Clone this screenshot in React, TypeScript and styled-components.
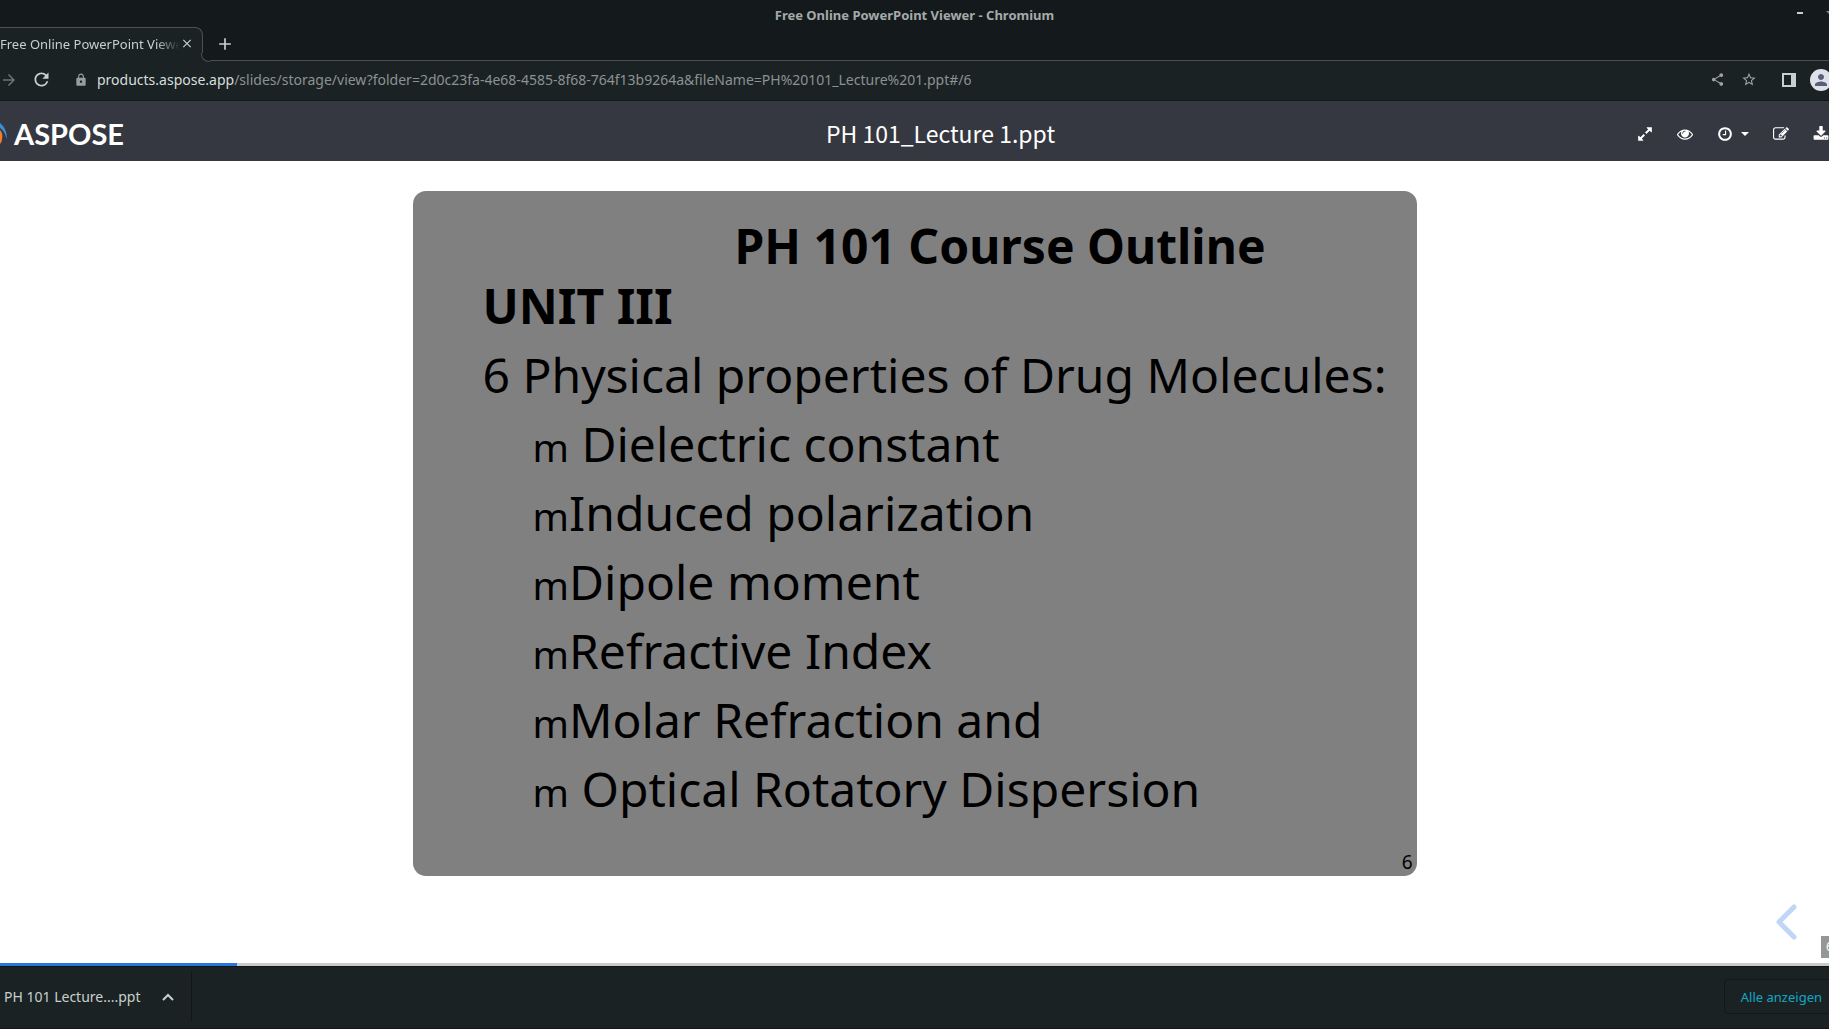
import React from 'react';
import styled, { createGlobalStyle } from 'styled-components';
import { MdArrowForward, MdClose, MdLock, MdPerson, MdRefresh, MdShare, MdStarBorder, MdAdd } from 'react-icons/md';

const color = {
  frame: '#141a1c',
  toolbar: '#1b2224',
  line: '#4b5153',
  text: '#c8d0ce',
  muted: '#8b9292',
  header: '#353840',
  slide: '#808080',
  accent: '#2a76dd',
  link: '#12a8c4',
};

const Global = createGlobalStyle`
  * { box-sizing: border-box; }
  html, body { margin: 0; height: 100%; }
  #root { height: 100%; }
  body { overflow: hidden; font-family: "Noto Sans", sans-serif; background: #fff; }
  button { font: inherit; color: inherit; background: none; border: 0; padding: 0; cursor: pointer; }
  svg { display: block; }
`;

const Window = styled.div`
  display: flex;
  flex-direction: column;
  height: 100vh;
  min-height: 900px;
  overflow: hidden;
`;

const TitleBar = styled.div`
  display: grid;
  grid-template-columns: 1fr auto 1fr;
  align-items: center;
  height: 27px;
  flex: none;
  padding-top: 3px;
  background: ${color.frame};
  color: #a4aba9;
  font-size: 13px;
  line-height: 20px;
  font-weight: 700;
`;

const WindowControls = styled.div`
  grid-column: 3;
  justify-self: end;
  display: flex;
  align-items: center;
  gap: 22px;
  margin-right: -6px;
  padding-bottom: 4px;
  color: ${color.text};
`;

const TabStrip = styled.div`
  display: flex;
  height: 34px;
  flex: none;
  background: ${color.frame};
`;

const Tab = styled.div`
  position: relative;
  display: flex;
  align-items: center;
  width: 203px;
  padding: 0 8px 2px 0;
  background: ${color.toolbar};
  border: 1px solid ${color.line};
  border-width: 1px 1px 0 0;
  border-top-right-radius: 8px;
  color: ${color.text};
  font-size: 13px;
  line-height: 18px;
`;

const TabTitle = styled.span`
  flex: 1;
  overflow: hidden;
  white-space: nowrap;
  mask-image: linear-gradient(to right, #000 calc(100% - 24px), transparent);
`;

const TabFoot = styled.span`
  position: absolute;
  right: -8px;
  bottom: 0;
  width: 8px;
  height: 8px;
  background: ${color.toolbar};

  &::before {
    content: '';
    display: block;
    height: 100%;
    margin-left: -1px;
    background: ${color.frame};
    border: 1px solid ${color.line};
    border-width: 0 0 1px 1px;
    border-bottom-left-radius: 8px;
  }
`;

const TabEnd = styled.div`
  flex: 1;
  display: flex;
  align-items: center;
  padding-left: 12px;
  border-bottom: 1px solid ${color.line};
  color: ${color.text};
`;

const SquareButton = styled.button<{ $size: number }>`
  display: flex;
  align-items: center;
  justify-content: center;
  flex: none;
  width: ${(p) => p.$size}px;
  height: ${(p) => p.$size}px;
`;

const Toolbar = styled.div`
  display: flex;
  align-items: center;
  height: 40px;
  flex: none;
  padding-bottom: 2px;
  background: ${color.toolbar};
  border-bottom: 1px solid #141819;
  color: ${color.text};
`;

const NavButtons = styled.div`
  display: flex;
  align-items: center;
  gap: 12px;
  width: 74px;
`;

const Address = styled.div`
  flex: 1;
  min-width: 0;
  display: flex;
  align-items: center;
  gap: 9px;
  overflow: hidden;
  white-space: nowrap;
  font-size: 14px;
  line-height: 20px;
  color: ${color.muted};
  strong { font-weight: 400; color: #d5dedc; }
`;

const ToolbarActions = styled.div`
  display: flex;
  align-items: center;
  margin-right: -3px;
  color: #9ea5a4;
`;

const ToolButton = styled(SquareButton)<{ $gap?: number }>`
  margin-left: ${(p) => p.$gap ?? 0}px;
`;

const Avatar = styled.button`
  display: flex;
  align-items: center;
  justify-content: center;
  width: 22px;
  height: 22px;
  margin-left: 11px;
  border-radius: 50%;
  background: #dfe1e8;
  color: #56607a;
`;

const AppHeader = styled.header`
  display: flex;
  align-items: center;
  height: 60px;
  flex: none;
  padding-top: 6px;
  background: ${color.header};
  color: #fff;
`;

const Brand = styled.a`
  flex: 1;
  display: flex;
  align-items: center;
  gap: 7px;
  color: #fff;
  text-decoration: none;
  font-family: Lato, sans-serif;
  font-size: 29px;
  line-height: 32px;
  font-weight: 700;
`;

const FileName = styled.h1`
  margin: 0;
  padding: 0 0 3px 52px;
  font-family: "Noto Sans CJK SC", sans-serif;
  font-size: 23px;
  line-height: 32px;
  font-weight: 400;
`;

const HeaderSide = styled.div`
  flex: 1;
  display: flex;
  justify-content: flex-end;
`;

const Actions = styled.div`
  display: flex;
  align-items: center;
  gap: 24px;
`;

const HeaderButton = styled.button`
  display: flex;
  align-items: center;
  gap: 8px;
`;

const Caret = styled.span`
  border: 4px solid transparent;
  border-top-color: #fff;
  border-bottom: 0;
`;

const Viewer = styled.main`
  position: relative;
  flex: 1;
  min-height: 0;
  overflow: hidden;
  padding-top: 30px;
  background: #fff;
`;

const Slide = styled.article`
  display: flex;
  flex-direction: column;
  width: 1004px;
  max-width: 92%;
  margin: 0 auto;
  padding: 25px 4px 0 70px;
  border-radius: 13px;
  background: ${color.slide};
  color: #000;
  font-size: 48px;
  line-height: 69px;
`;

const SlideTitle = styled.h2`
  margin: 0;
  padding-left: 252px;
  font-size: 48px;
  line-height: 60px;
  font-weight: 700;
`;

const Unit = styled.h3`
  margin: 0 0 4px;
  font-size: 48px;
  line-height: 60px;
  font-weight: 700;
`;

const Topic = styled.p`
  margin: 0;
`;

const Points = styled.ul`
  margin: 0;
  padding: 0 0 0 50px;
  list-style: none;
`;

const Point = styled.li`
  white-space: pre;
`;

const Marker = styled.span`
  font-size: 39px;
  line-height: 48px;
`;

const PageNumber = styled.footer`
  align-self: flex-end;
  padding: 26px 0 0;
  font-size: 19px;
  line-height: 27px;
`;

const Previous = styled.button`
  position: absolute;
  right: 30px;
  bottom: 22px;
  color: #bfd6f6;
`;

const SlideBadge = styled.span`
  position: absolute;
  right: -28px;
  bottom: 5px;
  width: 36px;
  padding: 0 5px;
  background: #959797;
  color: #fff;
  font-size: 12px;
  line-height: 22px;
`;

const Progress = styled.div`
  height: 3px;
  flex: none;
  background: #c9caca;
`;

const ProgressFill = styled.div`
  height: 100%;
  background: ${color.accent};
`;

const Shelf = styled.footer`
  display: flex;
  align-items: center;
  justify-content: space-between;
  height: 63px;
  flex: none;
  padding-bottom: 2px;
  background: ${color.toolbar};
  border: 1px solid #111617;
  border-width: 1px 0;
  color: ${color.text};
`;

const Download = styled.div`
  display: flex;
  align-items: center;
  justify-content: space-between;
  width: 192px;
  height: 49px;
  padding: 0 16px 0 4px;
  border-right: 1px solid #111617;
  font-size: 14px;
  line-height: 20px;
`;

const ShowAll = styled.button`
  height: 35px;
  margin-right: -10px;
  padding: 0 16px;
  border: 1px solid #12181a;
  border-radius: 4px;
  color: ${color.link};
  font-size: 13px;
  line-height: 18px;
`;

const glyphs = {
  expand:
    'M883 1056q0 13-10 23l-332 332 144 144q19 19 19 45t-19 45-45 19h-448q-26 0-45-19t-19-45v-448q0-26 19-45t45-19 45 19l144 144 332-332q10-10 23-10t23 10l114 114q10 10 10 23zm781-864v448q0 26-19 45t-45 19-45-19l-144-144-332 332q-10 10-23 10t-23-10l-114-114q-10-10-10-23t10-23l332-332-144-144q-19-19-19-45t19-45 45-19h448q26 0 45 19t19 45z',
  eye:
    'M1664 960q-152-236-381-353 61 104 61 225 0 185-131.5 316.5t-316.5 131.5-316.5-131.5-131.5-316.5q0-121 61-225-229 117-381 353 133 205 333.5 326.5t434.5 121.5 434.5-121.5 333.5-326.5zm-720-384q0-20-14-34t-34-14q-125 0-214.5 89.5t-89.5 214.5q0 20 14 34t34 14 34-14 14-34q0-86 61-147t147-61q20 0 34-14t14-34zm848 384q0 34-20 69-140 230-376.5 368.5t-499.5 138.5-499.5-139-376.5-368q-20-35-20-69t20-69q140-229 376.5-368t499.5-139 499.5 139 376.5 368q20 35 20 69z',
  clock:
    'M1024 544v448q0 14-9 23t-23 9h-320q-14 0-23-9t-9-23v-64q0-14 9-23t23-9h224v-352q0-14 9-23t23-9h64q14 0 23 9t9 23zm416 352q0-148-73-273t-198-198-273-73-273 73-198 198-73 273 73 273 198 198 273 73 273-73 198-198 73-273zm224 0q0 209-103 385.5t-279.5 279.5-385.5 103-385.5-103-279.5-279.5-103-385.5 103-385.5 279.5-279.5 385.5-103 385.5 103 279.5 279.5 103 385.5z',
  edit:
    'M888 1184l116-116-152-152-116 116v56h96v96h56zm440-720q-16-16-33 1l-350 350q-17 17-1 33t33-1l350-350q17-17 1-33zm80 594v190q0 119-84.5 203.5t-203.5 84.5h-832q-119 0-203.5-84.5t-84.5-203.5v-832q0-119 84.5-203.5t203.5-84.5h832q63 0 117 25 15 7 18 23 3 17-9 29l-49 49q-14 14-32 8-23-6-45-6h-832q-66 0-113 47t-47 113v832q0 66 47 113t113 47h832q66 0 113-47t47-113v-126q0-13 9-22l64-64q15-15 35-7t20 29zm-96-738l288 288-672 672h-288v-288zm444 132l-92 92-288-288 92-92q28-28 68-28t68 28l152 152q28 28 28 68t-28 68z',
  download:
    'M1344 1344q0-26-19-45t-45-19-45 19-19 45 19 45 45 19 45-19 19-45zm256 0q0-26-19-45t-45-19-45 19-19 45 19 45 45 19 45-19 19-45zm128-224v320q0 40-28 68t-68 28h-1472q-40 0-68-28t-28-68v-320q0-40 28-68t68-28h465l135 136q58 56 136 56t136-56l136-136h464q40 0 68 28t28 68zm-325-569q17 41-14 70l-448 448q-18 19-45 19t-45-19l-448-448q-31-29-14-70 17-39 59-39h256v-448q0-26 19-45t45-19h256q26 0 45 19t19 45v448h256q42 0 59 39z',
};

const Glyph = ({ name }: { name: keyof typeof glyphs }) => (
  <svg width="16" height="16" viewBox="0 0 1792 1792" fill="currentColor" aria-hidden="true">
    <path d={glyphs[name]} />
  </svg>
);

const points = [
  ' Dielectric constant',
  'Induced polarization',
  'Dipole moment',
  'Refractive Index',
  'Molar Refraction and',
  ' Optical Rotatory Dispersion',
];

const current = 6;
const progress = 12.96;

export default function App() {
  return (
    <Window>
      <Global />
      <TitleBar>
        <span />
        <span>Free Online PowerPoint Viewer - Chromium</span>
        <WindowControls>
          <button aria-label="Minimize">
            <svg width="6" height="2"><rect width="6" height="2" fill="currentColor" /></svg>
          </button>
          <button aria-label="Restore">
            <svg width="10" height="6" viewBox="0 0 10 6"><path d="M1 1h8l-4 4z" fill="#7c8483" /></svg>
          </button>
        </WindowControls>
      </TitleBar>

      <TabStrip>
        <Tab>
          <TabTitle>Free Online PowerPoint Viewer</TabTitle>
          <SquareButton $size={14} aria-label="Close tab"><MdClose size={15} /></SquareButton>
          <TabFoot />
        </Tab>
        <TabEnd>
          <SquareButton $size={20} aria-label="New tab"><MdAdd size={20} /></SquareButton>
        </TabEnd>
      </TabStrip>

      <Toolbar>
        <NavButtons>
          <SquareButton $size={18} aria-label="Forward" disabled><MdArrowForward size={20} color="#6d7474" /></SquareButton>
          <SquareButton $size={22} aria-label="Reload"><MdRefresh size={21} /></SquareButton>
        </NavButtons>
        <Address>
          <MdLock size={14} color="#979e9e" />
          <span>
            <strong>products.aspose.app</strong>
            /slides/storage/view?folder=2d0c23fa-4e68-4585-8f68-764f13b9264a&amp;fileName=PH%20101_Lecture%201.ppt#/6
          </span>
        </Address>
        <ToolbarActions>
          <ToolButton $size={16} aria-label="Share"><MdShare size={15} /></ToolButton>
          <ToolButton $size={16} $gap={16} aria-label="Bookmark"><MdStarBorder size={17} /></ToolButton>
          <ToolButton $size={20} $gap={22} aria-label="Side panel">
            <svg width="14" height="14" fill="#c8d0ce"><path fillRule="evenodd" d="M0 0h14v14H0zM2 2v10h7V2z" /></svg>
          </ToolButton>
          <Avatar aria-label="Profile"><MdPerson size={18} /></Avatar>
        </ToolbarActions>
      </Toolbar>

      <AppHeader>
        <Brand href="#home">
          <svg width="7" height="24" viewBox="0 0 7 24" aria-hidden="true">
            <path d="M0 1C4 4 7 9 7 17C5 11 3 8 0 6z" fill="#3b8fd0" />
            <path d="M0 8C2 10 3 13 2 17C2 19 1 21 0 22z" fill="#ee7f2b" />
          </svg>
          ASPOSE
        </Brand>
        <FileName>PH 101_Lecture 1.ppt</FileName>
        <HeaderSide>
          <Actions>
            <HeaderButton aria-label="Full screen"><Glyph name="expand" /></HeaderButton>
            <HeaderButton aria-label="View"><Glyph name="eye" /></HeaderButton>
            <HeaderButton aria-label="History"><Glyph name="clock" /><Caret /></HeaderButton>
            <HeaderButton aria-label="Edit"><Glyph name="edit" /></HeaderButton>
            <HeaderButton aria-label="Download"><Glyph name="download" /></HeaderButton>
          </Actions>
        </HeaderSide>
      </AppHeader>

      <Viewer>
        <Slide>
          <SlideTitle>PH 101 Course Outline</SlideTitle>
          <Unit>UNIT III</Unit>
          <Topic>6 Physical properties of Drug Molecules:</Topic>
          <Points>
            {points.map((point) => (
              <Point key={point}><Marker>m</Marker>{point}</Point>
            ))}
          </Points>
          <PageNumber>{current}</PageNumber>
        </Slide>
        <Previous aria-label="Previous slide">
          <svg width="24" height="38" viewBox="0 0 24 38" fill="none" stroke="currentColor" strokeWidth="5" strokeLinecap="round" strokeLinejoin="round">
            <path d="M19 4L4 19L19 34" />
          </svg>
        </Previous>
        <SlideBadge>{current}</SlideBadge>
      </Viewer>
      <Progress>
        <ProgressFill style={{ width: `${progress}%` }} />
      </Progress>

      <Shelf>
        <Download>
          <span>PH 101 Lecture....ppt</span>
          <button aria-label="Download options">
            <svg width="14" height="14" viewBox="0 0 14 14" fill="none" stroke="currentColor" strokeWidth="2"><path d="M2 10L7 5L12 10" /></svg>
          </button>
        </Download>
        <ShowAll>Alle anzeigen</ShowAll>
      </Shelf>
    </Window>
  );
}
